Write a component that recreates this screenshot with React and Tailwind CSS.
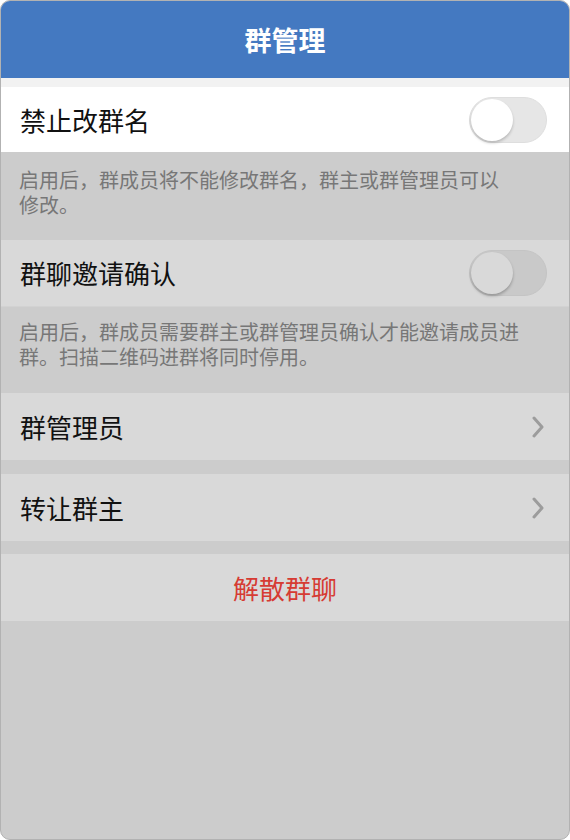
import React, { useState } from "react";

const font = { fontFamily: '"Noto Sans CJK SC", "Noto Sans", sans-serif' };

const Toggle = ({ on, dim, onClick }) => {
  return (
    <button
      onClick={onClick}
      className={
        dim
          ? "w-[78px] h-[46px] rounded-full bg-[#c9c9c9] border border-[#c4c4c4] flex items-center px-[1px]"
          : "w-[78px] h-[46px] rounded-full bg-[#e6e6e6] border border-[#dedede] flex items-center px-[1px]"
      }
    >
      <span
        className={
          dim
            ? "w-[42px] h-[42px] rounded-full bg-[#d9d9d9] shadow-[0_2px_3px_rgba(0,0,0,0.25)]"
            : "w-[42px] h-[42px] rounded-full bg-white shadow-[0_2px_3px_rgba(0,0,0,0.2)]"
        }
      />
    </button>
  );
};

const Chevron = () => (
  <svg width="14" height="22" viewBox="0 0 14 22" fill="none">
    <path
      d="M3 2 L11 11 L3 20"
      stroke="#9c9c9c"
      strokeWidth="3"
      strokeLinecap="round"
      strokeLinejoin="round"
    />
  </svg>
);

const App = () => {
  const [noRename, setNoRename] = useState(false);
  const [inviteConfirm, setInviteConfirm] = useState(false);

  return (
    <div
      style={font}
      className="w-[570px] h-[840px] rounded-[10px] border border-[#b2b2b2] overflow-hidden flex flex-col bg-[#cccccc]"
    >
      <div className="h-[77px] shrink-0 bg-[#4479c1] flex items-center justify-center">
        <h1 className="text-[27px] font-bold text-white leading-none">群管理</h1>
      </div>

      <div className="h-[9px] shrink-0 bg-[#f2f2f2]" />

      <div className="h-[65px] shrink-0 bg-white flex items-center justify-between pl-[19px] pr-[22px]">
        <span className="text-[26px] leading-[30px] text-[#111]">禁止改群名</span>
        <Toggle on={noRename} onClick={() => setNoRename(!noRename)} />
      </div>

      <div className="pt-[15px] pb-[23px] pl-[18px] pr-[20px] text-[20px] leading-[25px] text-[#777777]">
        <div>启用后，群成员将不能修改群名，群主或群管理员可以</div>
        <div>修改。</div>
      </div>

      <div className="h-[67px] shrink-0 bg-[#d9d9d9] border-b border-[#d2d2d2] flex items-center justify-between pl-[19px] pr-[22px]">
        <span className="text-[26px] leading-[30px] text-[#111]">群聊邀请确认</span>
        <Toggle dim on={inviteConfirm} onClick={() => setInviteConfirm(!inviteConfirm)} />
      </div>

      <div className="pt-[12px] pb-[24px] pl-[18px] pr-[20px] text-[20px] leading-[25px] text-[#777777]">
        <div>启用后，群成员需要群主或群管理员确认才能邀请成员进</div>
        <div>群。扫描二维码进群将同时停用。</div>
      </div>

      <div className="h-[67px] shrink-0 bg-[#d9d9d9] flex items-center justify-between pl-[19px] pr-[24px]">
        <span className="text-[26px] leading-[30px] text-[#111]">群管理员</span>
        <Chevron />
      </div>

      <div className="h-[14px] shrink-0" />

      <div className="h-[67px] shrink-0 bg-[#d9d9d9] flex items-center justify-between pl-[19px] pr-[24px]">
        <span className="text-[26px] leading-[30px] text-[#111]">转让群主</span>
        <Chevron />
      </div>

      <div className="h-[13px] shrink-0" />

      <button className="h-[67px] shrink-0 bg-[#d9d9d9] flex items-center justify-center">
        <span className="text-[26px] leading-[30px] text-[#d63b33]">解散群聊</span>
      </button>
    </div>
  );
};

export default App;
